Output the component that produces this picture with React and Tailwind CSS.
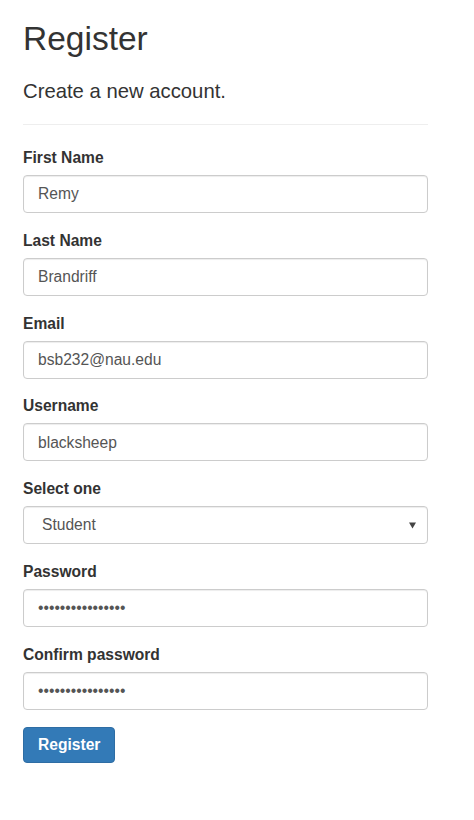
import React from "react";

const fields = [
  { label: "First Name", value: "Remy" },
  { label: "Last Name", value: "Brandriff" },
  { label: "Email", value: "bsb232@nau.edu" },
  { label: "Username", value: "blacksheep" },
];

function Label({ children }) {
  return (
    <label className="block text-[15.6px] leading-[22px] font-bold text-[#333] mb-[6px]">
      {children}
    </label>
  );
}

function Box({ children, className = "" }) {
  return (
    <div
      className={
        "flex items-center h-[38px] w-full rounded-[4px] border border-[#ccc] bg-white shadow-[inset_0_1px_1px_rgba(0,0,0,0.075)] text-[15.6px] text-[#555] " +
        className
      }
    >
      {children}
    </div>
  );
}

export default function App() {
  return (
    <div className="min-h-[820px] bg-white font-['Liberation_Sans',Arial,sans-serif] text-[#333] pl-[23px] pt-[20px]">
      <div className="w-[405px]">
        <h2 className="text-[33.5px] leading-[37px] font-normal text-[#333]">Register</h2>
        <h4 className="mt-[23px] text-[20.3px] leading-[22px] font-normal text-[#333]">
          Create a new account.
        </h4>
        <hr className="mt-[22px] mb-[22px] border-0 border-t border-[#eee]" />

        {fields.map((f) => (
          <div key={f.label} className="mb-[16.8px]">
            <Label>{f.label}</Label>
            <Box className="px-[14px]">{f.value}</Box>
          </div>
        ))}

        <div className="mb-[16.8px]">
          <Label>Select one</Label>
          <Box className="pl-[18px] pr-[10px] justify-between">
            <span>Student</span>
            <svg width="7" height="7" viewBox="0 0 7 7" className="mr-[1px]">
              <polygon points="0,0.5 7,0.5 3.5,6.5" fill="#444" />
            </svg>
          </Box>
        </div>

        <div className="mb-[16.8px]">
          <Label>Password</Label>
          <Box className="px-[14px]">
            <span className="leading-none">{"\u2022".repeat(16)}</span>
          </Box>
        </div>

        <div className="mb-[16.8px]">
          <Label>Confirm password</Label>
          <Box className="px-[14px]">
            <span className="leading-none">{"\u2022".repeat(16)}</span>
          </Box>
        </div>

        <button className="h-[36px] px-[14px] rounded-[4px] bg-[#337ab7] border border-[#2e6da4] text-white font-bold text-[15.6px] leading-none">
          Register
        </button>
      </div>
    </div>
  );
}
